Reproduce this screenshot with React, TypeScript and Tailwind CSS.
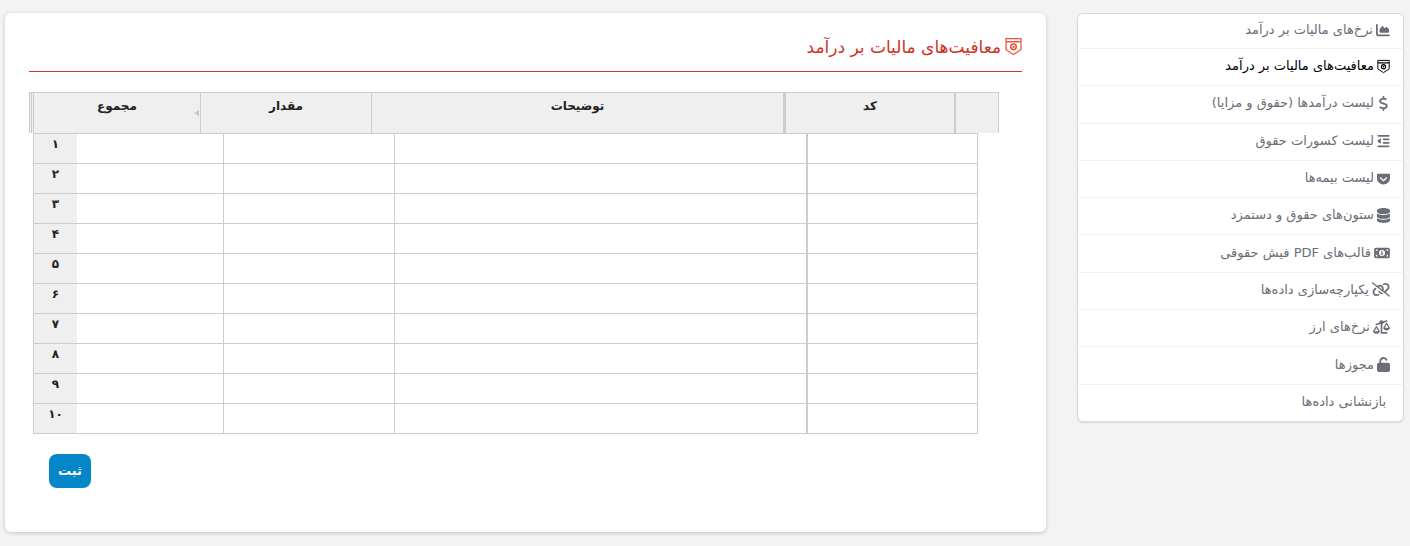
import React from "react";
import { FaChartArea, FaDollarSign, FaOutdent, FaDatabase, FaMoneyBill1, FaLinkSlash, FaScaleUnbalanced, FaUnlock } from "react-icons/fa6";

const Shield = ({ className }: { className?: string }) => (
  <svg viewBox="0 0 16 17" className={className} fill="none" stroke="currentColor">
    <path d="M1 1h14v10.5L8 16l-7-4.500z" strokeWidth="1.2" />
    <path d="M1 4h14" strokeWidth="1.4" />
    <circle cx="8" cy="8.800" r="2.600" strokeWidth="1.500" />
    <circle cx="8" cy="8.800" r=".6" fill="currentColor" />
  </svg>
);
const Pocket = ({ className }: { className?: string }) => (
  <svg viewBox="0 0 16 16" className={className} fill="currentColor">
    <path d="M1 2h14a1 1 0 0 1 1 1v5a7.900 7.900 0 0 1-8 7.500A7.900 7.900 0 0 1 0 8V3a1 1 0 0 1 1-1zm3.400 4.200L3.300 7.300 8 11.700l4.700-4.400-1.100-1.100L8 9.500z" />
  </svg>
);

const items: { t: string; i?: React.ReactNode; active?: boolean }[] = [
  { t: "نرخ‌های مالیات بر درآمد", i: <FaChartArea className="w-[14px] h-[14px]" /> },
  { t: "معافیت‌های مالیات بر درآمد", i: <Shield className="w-[13px] h-[15px]" />, active: true },
  { t: "لیست درآمدها (حقوق و مزایا)", i: <FaDollarSign className="w-[13px] h-[15px]" /> },
  { t: "لیست کسورات حقوق", i: <FaOutdent className="w-[13px] h-[14px]" /> },
  { t: "لیست بیمه‌ها", i: <Pocket className="w-[13px] h-[13px]" /> },
  { t: "ستون‌های حقوق و دستمزد", i: <FaDatabase className="w-[13px] h-[15px]" /> },
  { t: "قالب‌های PDF فیش حقوقی", i: <FaMoneyBill1 className="w-[16px] h-[14px]" /> },
  { t: "یکپارچه‌سازی داده‌ها", i: <FaLinkSlash className="w-[18px] h-[15px]" /> },
  { t: "نرخ‌های ارز", i: <FaScaleUnbalanced className="w-[17px] h-[14px]" /> },
  { t: "مجوزها", i: <FaUnlock className="w-[13px] h-[15px]" /> },
  { t: "بازنشانی داده‌ها" },
];

const nums = ["۱", "۲", "۳", "۴", "۵", "۶", "۷", "۸", "۹", "۱۰"];
const heads = ["کد", "توضیحات", "مقدار", "مجموع"];
const headW = ["w-[172px]", "w-[412px]", "w-[171px]", "w-[167px]"];
const bodyW = ["w-[171px]", "w-[412px]", "w-[171px]", "w-[146px]"];

export default function App() {
  return (
    <div dir="rtl" className="w-[1410px] h-[546px] overflow-hidden bg-[#f3f3f3] text-[13px] font-['DejaVu_Sans',_'Noto_Sans',sans-serif] pt-[13px] pr-[6px] pl-[5px] flex gap-[31px] items-start">
      <aside className="w-[327px] h-[409px] shrink-0 bg-white rounded-[6px] border border-[#d9dadd] shadow-[0_1px_2px_rgba(0,0,0,0.1)] px-[1px] flex flex-col overflow-hidden">
        {items.map((it, k) => (
          <div key={k} className={`${k === 0 ? "h-[35px]" : "flex-1"} flex items-center gap-[3px] pb-[2px] ${it.i ? "pr-[12px]" : "pr-[16px]"} ${k < items.length - 1 ? "border-b border-[#f0f1f2]" : ""} ${it.active ? "text-black" : "text-[#6b6e76]"}`}>
            {it.i}
            <span className="leading-[18px]">{it.t}</span>
          </div>
        ))}
      </aside>
      <main className="w-[1042px] h-[519px] bg-white rounded-[6px] shadow-[0_1px_4px_rgba(0,0,0,0.2)] pt-[22px] pr-[24px] pl-[24px]">
        <div className="h-[37px] border-b border-[#c83a2a] text-[#d0321f] flex items-start gap-[4px] text-[17px]">
          <Shield className="w-[17px] h-[19px] text-[#e8563f] mt-[2px]" />
          <span className="leading-[24px]">معافیت‌های مالیات بر درآمد</span>
        </div>
        <div className="mt-[20px] w-[970px] mr-[23px] relative">
          <div className="flex h-[41px] w-[970px] bg-[#efefef] border border-[#ccc] border-b-0 text-[12px] font-bold text-[#222]">
            <div className="w-[42px] shrink-0" />
            {heads.map((h, k) => (
              <div key={k} className={`${headW[k]} shrink-0 relative border-r border-[#ccc] text-center pt-[4px] ${k === 0 ? "border-r-2 border-l-2" : ""}`}>
                {h}
                {k === 3 && <span className="absolute right-[1px] top-[17px] w-0 h-0 border-y-[3px] border-y-transparent border-r-[5px] border-r-[#c8c8c8]" />}
              </div>
            ))}
            <div className="flex-1 border-r-[3px] border-double border-[#ccc]" />
          </div>
          <div className="w-[945px] mr-[21px] border border-[#ccc] border-t-0">
            {nums.map((n) => (
              <div key={n} className="flex h-[30px] border-t border-[#ccc]">
                {bodyW.map((w, k) => (
                  <div key={k} className={`${w} shrink-0 ${k === 3 ? "" : "border-l border-[#ccc]"} ${k === 0 ? "border-l-2" : ""}`} />
                ))}
                <div className="flex-1 bg-[#efefef] text-center text-[12px] font-bold text-[#222] pt-[1px] leading-[18px]">{n}</div>
              </div>
            ))}
          </div>
        </div>
        <div className="mt-[20px] flex justify-end pl-[20px]">
          <button className="w-[42px] h-[34px] rounded-[8px] bg-[#0586c9] text-white text-[13px] font-bold">ثبت</button>
        </div>
      </main>
    </div>
  );
}
